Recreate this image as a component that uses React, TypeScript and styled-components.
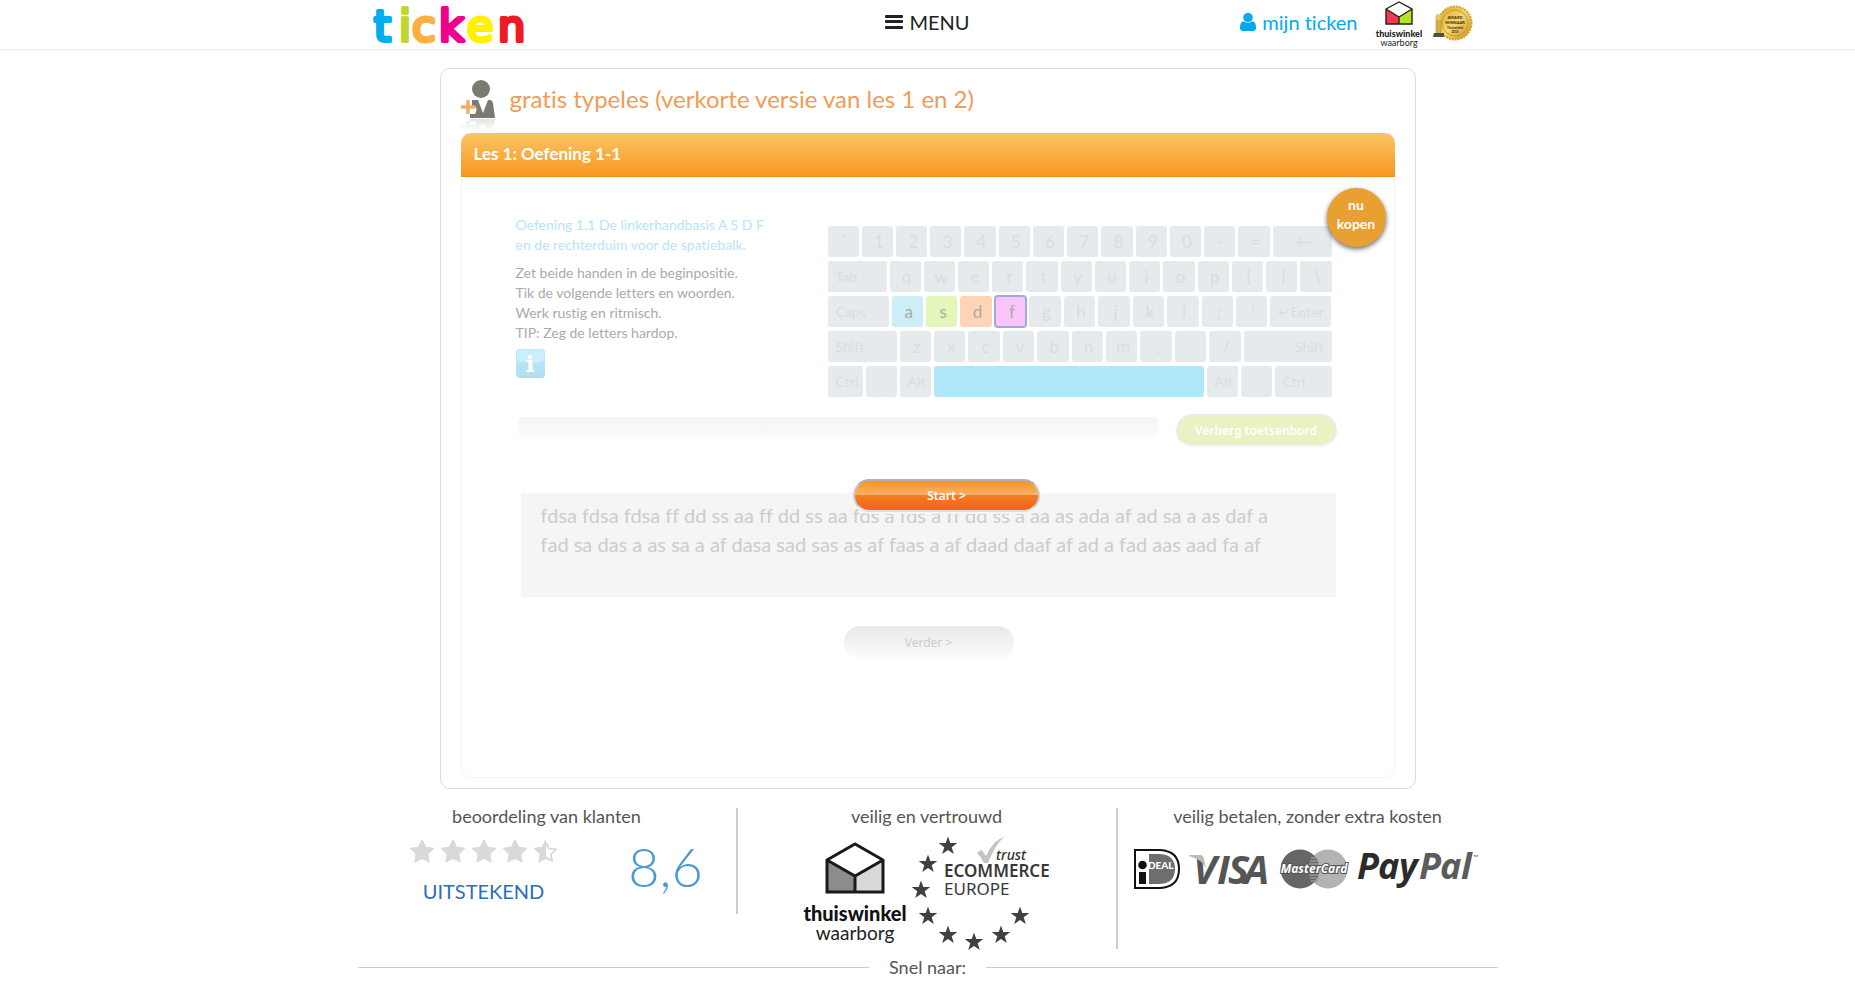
import React from 'react';
import styled, { createGlobalStyle, css } from 'styled-components';

const GlobalStyle = createGlobalStyle`
  *, *::before, *::after { box-sizing: border-box; }
  body {
    margin: 0;
    background: #fff;
    color: #555;
    font-family: Lato, "Liberation Sans", sans-serif;
    font-size: 18px;
    font-variant-ligatures: none;
  }
  h1, h2, h3, p { margin: 0; font-weight: 400; }
  button { font-family: inherit; cursor: pointer; }
  a { text-decoration: none; }
  svg { display: block; flex: none; overflow: visible; }
`;

/* ---------- top bar ---------- */

const TopBar = styled.header`
  border-bottom: 1px solid #eee;
  box-shadow: 0 1px 3px rgba(0, 0, 0, 0.05);
`;

const TopInner = styled.div`
  display: grid;
  grid-template-columns: 1fr auto 1fr;
  align-items: center;
  max-width: 1140px;
  height: 49px;
  margin: 0 auto;
  padding: 0 25px 0 15px;
`;

const HomeLink = styled.a`
  justify-self: start;
`;

const MenuButton = styled.button`
  display: flex;
  align-items: center;
  gap: 6px;
  height: 44px;
  padding: 0 0 6px;
  margin-left: 10px;
  border: 0;
  background: none;
  color: #222;
  font-size: 20px;
`;

const TopRight = styled.div`
  display: flex;
  justify-content: flex-end;
  align-items: center;
`;

const AccountLink = styled.a`
  display: flex;
  align-items: center;
  gap: 6px;
  height: 44px;
  margin-right: 16px;
  padding-bottom: 6px;
  color: #00a9f0;
  font-size: 20px;
`;

const BadgeLink = styled.a`
  margin-left: 8px;
  padding-bottom: 4px;
`;

/* ---------- lesson card ---------- */

const Card = styled.main`
  max-width: 976px;
  margin: 18px auto 19px;
  padding: 0 20px 10px;
  border: 1px solid #ddd;
  border-radius: 10px;
`;

const TitleRow = styled.div`
  display: flex;
  align-items: center;
  gap: 15px;
  height: 64px;
  padding-top: 8px;
`;

const Title = styled.h1`
  color: #ee9c57;
  font-size: 24px;
  line-height: 30px;
  padding-bottom: 12px;
`;

const Panel = styled.section`
  position: relative;
  border: 1px solid #f5f5f5;
  border-top: 0;
  border-radius: 10px;
`;

const PanelHead = styled.h2`
  margin: 0 -1px;
  padding: 0 13px 2px;
  border-bottom: 1px solid #f08a1c;
  border-radius: 10px 10px 0 0;
  background: linear-gradient(#fac562, #f99722);
  color: #fff;
  font-size: 17px;
  font-weight: 700;
  line-height: 41px;
`;

const PanelBody = styled.div`
  padding: 38px 57px 118px 54px;
`;

const BuyBadge = styled.a`
  position: absolute;
  top: 55px;
  right: 8px;
  display: flex;
  align-items: center;
  justify-content: center;
  width: 59px;
  height: 59px;
  padding-bottom: 8px;
  border-radius: 50%;
  background: #e9a033;
  box-shadow: 0 2px 5px rgba(0, 0, 0, 0.6);
  color: #fff;
  font-size: 14px;
  font-weight: 700;
  line-height: 19px;
  text-align: center;
`;

const LessonRow = styled.div`
  display: flex;
  justify-content: space-between;
  padding-right: 5px;
`;

const Instructions = styled.div`
  color: #aaa;
  font-size: 14px;
  line-height: 20px;
`;

const Goal = styled.p`
  margin-bottom: 8px;
  color: #b8e4fb;
`;

const InfoButton = styled.button`
  display: block;
  margin-top: 6px;
  padding: 0;
  border: 0;
  background: none;
`;

/* ---------- keyboard ---------- */

const Keyboard = styled.div`
  display: flex;
  flex-direction: column;
  gap: 4px;
  width: 504px;
  margin-top: 11px;
`;

const KeyRow = styled.div`
  display: flex;
  gap: 3px;
`;

type KeyProps = { $w?: number; $bg?: string; $small?: boolean; $end?: boolean; $active?: boolean };

const Key = styled.span<KeyProps>`
  ${({ $w }) => ($w ? css`flex: none; width: ${$w}px;` : css`flex: 1 1 0;`)}
  height: 31px;
  padding: ${({ $small }) => ($small ? '0 8px' : '0 0 0 3px')};
  border-radius: 3px;
  background: ${({ $bg }) => $bg || '#e5eaec'};
  color: ${({ $bg }) => ($bg ? '#aaa' : '#dadddf')};
  font-size: ${({ $small }) => ($small ? 14 : 17)}px;
  line-height: 31px;
  text-align: ${({ $small, $end }) => ($small ? ($end ? 'right' : 'left') : 'center')};
  white-space: nowrap;
  box-shadow: ${({ $active }) => ($active ? '0 0 0 1px #a0a8dc, inset 0 0 0 1px #a0a8dc' : 'none')};
`;

/* ---------- progress and typing area ---------- */

const ProgressRow = styled.div`
  display: flex;
  justify-content: space-between;
  align-items: flex-start;
  gap: 18px;
  margin-top: 17px;
  padding-left: 2px;
`;

const ProgressTrack = styled.div`
  flex: 1;
  height: 20px;
  margin-top: 3px;
  border-radius: 4px;
  background: linear-gradient(#f5f5f5, #fbfbfb);
`;

const PillButton = styled.button`
  height: 33px;
  padding: 0;
  border: 0;
  border-radius: 17px;
  font-family: "Noto Sans", "Open Sans", sans-serif;
  font-size: 12px;
  line-height: 33px;
`;

const HideButton = styled(PillButton)`
  width: 161px;
  border: 2px solid #ebebeb;
  border-bottom-color: #f5f5f5;
  background: #eaf2c4;
  color: #fff;
  font-weight: 600;
  line-height: 28px;
`;

const TypingArea = styled.div`
  position: relative;
  margin: 46px 1px 29px 5px;
  padding: 8px 20px 38px;
  background: #f5f5f5;
  color: #ccc;
  font-size: 20px;
  line-height: 29px;
  white-space: nowrap;
`;

const StartButton = styled(PillButton)`
  position: absolute;
  top: -14px;
  left: calc(50% - 75px);
  width: 187px;
  border: 2px solid #ccc;
  border-top-color: #b0b0b0;
  border-bottom-color: #ddd;
  background: linear-gradient(#f7941e, #fab06a 47%, #f47c20 50%, #f2641c);
  box-shadow: 0 2px 0 #f5f5f5;
  color: #fff;
  font-weight: 600;
  line-height: 28px;
`;

const Actions = styled.div`
  display: flex;
  justify-content: center;
  padding-left: 5px;
`;

const NextButton = styled(PillButton)`
  width: 170px;
  background: linear-gradient(#e9e9e9, #fcfcfc);
  color: #ccc;
`;

/* ---------- footer ---------- */

const Footer = styled.footer`
  max-width: 1140px;
  margin: 0 auto;
`;

const Columns = styled.div`
  display: grid;
  grid-template-columns: repeat(3, 1fr);
  align-items: start;
`;

const Column = styled.section`
  text-align: center;
  &:not(:last-child) { border-right: 2px solid #ccc; }
`;

const ColumnTitle = styled.h3`
  color: #555;
  font-size: 18px;
  line-height: 16px;
`;

const Rating = styled.div`
  display: grid;
  grid-template-columns: 9fr 4fr;
  align-items: center;
  height: 90px;
  padding-right: 14px;
`;

const StarRow = styled.div`
  display: flex;
  justify-content: center;
  gap: 5px;
  margin: 4px 0 14px;
`;

const Verdict = styled.p`
  color: #2a6fb8;
  font-size: 20px;
  line-height: 24px;
`;

const Score = styled.p`
  padding-bottom: 4px;
  color: #4a9bd3;
  font-size: 54px;
  font-weight: 300;
  line-height: 60px;
`;

const LogoRow = styled.div`
  display: flex;
  justify-content: center;
  padding: 10px 0 1px 2px;
`;

const PayRow = styled.div`
  display: flex;
  justify-content: center;
  align-items: center;
  gap: 9px;
  padding-top: 25px;
`;

const Divider = styled.div`
  display: flex;
  align-items: center;
  gap: 20px;
  margin-top: 9px;
  line-height: 18px;
  &::before, &::after {
    content: "";
    flex: 1;
    border-top: 1px solid #ccc;
  }
`;

/* ---------- drawings ---------- */

const STAR =
  'M1728 647q0 22-26 48l-363 354 86 500q1 7 1 20 0 21-10.5 35.5t-30.5 14.5q-19 0-40-12l-449-236-449 236q-22 12-40 12-21 0-31.5-14.5t-10.5-35.5q0-6 2-20l86-500-364-354q-25-27-25-48 0-37 56-46l502-73 225-455q19-41 49-41t49 41l225 455 502 73q56 9 56 46z';

const RatingStar = ({ half }: { half?: boolean }) => (
  <svg width="26" height="26" viewBox="0 0 1792 1792" fill="#d9d9d9" aria-hidden="true">
    {half ? (
      <>
        <clipPath id="left-half"><rect width="896" height="1792" /></clipPath>
        <path d={STAR} clipPath="url(#left-half)" />
        <path d="M896 250l190 400 520 62-370 350 76 440-416-215" fill="none" stroke="#d9d9d9" strokeWidth="130" strokeLinejoin="round" />
      </>
    ) : (
      <path d={STAR} />
    )}
  </svg>
);

const TickenLogo = () => (
  <svg width="156" height="44" viewBox="0 0 156 44" role="img" aria-label="ticken">
    <g fontFamily="DejaVu Sans, sans-serif" fontSize="43" strokeWidth="4" strokeLinejoin="round">
      <text x="1" y="38" fill="#00aeef" stroke="#00aeef">t</text>
      <text x="26" y="38" fill="#bfd730" stroke="#bfd730">i</text>
      <text x="39" y="38" fill="#fbb040" stroke="#fbb040">c</text>
      <text x="66" y="38" fill="#ec008c" stroke="#ec008c">k</text>
      <text x="94" y="38" fill="#fff200" stroke="#fff200">e</text>
      <text x="125" y="38" fill="#ed1c24" stroke="#ed1c24">n</text>
    </g>
  </svg>
);

const Bars = () => (
  <svg width="18" height="16" viewBox="0 0 18 16" fill="#222" aria-hidden="true">
    <rect y="1" width="18" height="3" rx="1" />
    <rect y="6" width="18" height="3" rx="1" />
    <rect y="12" width="18" height="3" rx="1" />
  </svg>
);

const UserIcon = () => (
  <svg width="16" height="18" viewBox="256 128 1280 1536" preserveAspectRatio="none" fill="#00a9f0" aria-hidden="true">
    <path d="M1536 1399q0 109-62.5 187t-150.5 78h-854q-88 0-150.5-78t-62.5-187q0-85 8.5-160.5t31.5-152 58.5-131 94-89 134.5-34.5q131 128 313 128t313-128q76 0 134.5 34.5t94 89 58.5 131 31.5 152 8.5 160.5zm-256-887q0 159-112.5 271.5t-271.5 112.5-271.5-112.5-112.5-271.5 112.5-271.5 271.5-112.5 271.5 112.5 112.5 271.5z" />
  </svg>
);

const Thuiswinkel = ({ small }: { small?: boolean }) => (
  <svg width={small ? 51 : 109} height={small ? 49 : 114} viewBox={small ? '0 0 51 49' : '0 0 109 114'} role="img" aria-label="thuiswinkel waarborg">
    {small ? (
      <>
        <path d="M12 9v15h13V17z" fill="#f5384b" />
        <path d="M38 9v15H25V17z" fill="#b5e61d" />
        <path d="M12 9L25 2l13 7v15H12zM12 9l13 8 13-8M25 17v7" fill="none" stroke="#222" strokeWidth="1.4" />
        <text x="25" y="37" textAnchor="middle" fontSize="9" fontWeight="900" fill="#222">thuiswinkel</text>
        <text x="25" y="46" textAnchor="middle" fontSize="9" fill="#222">waarborg</text>
      </>
    ) : (
      <>
        <path d="M25 26v32h28V42z" fill="#8c8c8c" />
        <path d="M81 26v32H53V42z" fill="#d9d9d9" />
        <path d="M25 26L53 10l28 16v32H25zM25 26l28 16 28-16M53 42v16" fill="none" stroke="#1a1a1a" strokeWidth="3" />
        <text x="53" y="87" textAnchor="middle" fontSize="20" fontWeight="900" fill="#111">thuiswinkel</text>
        <text x="53" y="106" textAnchor="middle" fontSize="19" fill="#222">waarborg</text>
      </>
    )}
  </svg>
);

const Medal = () => (
  <svg width="40" height="38" viewBox="0 0 40 38" role="img" aria-label="award">
    <defs>
      <linearGradient id="gold" x1="0" y1="0" x2="1" y2="1">
        <stop offset="0" stopColor="#d9a520" />
        <stop offset=".5" stopColor="#f4d878" />
        <stop offset="1" stopColor="#c28a14" />
      </linearGradient>
    </defs>
    <circle cx="22" cy="19" r="16.5" fill="url(#gold)" stroke="#d3a12a" strokeWidth="2" strokeDasharray="2 1" />
    <circle cx="22" cy="19" r="13" fill="none" stroke="#d09a1c" strokeWidth="1" />
    <g fontSize="4" fontWeight="900" fill="#4a3405" textAnchor="middle">
      <text x="22" y="15">AWARD</text>
      <text x="22" y="20">WINNAAR</text>
      <text x="22" y="25" fontSize="3">Thuiswinkel</text>
      <text x="22" y="29" fontSize="3">2015</text>
    </g>
    <rect x="3" y="12" width="5" height="18" rx="2" fill="#d6b044" stroke="#a88420" strokeWidth=".5" />
    <circle cx="5.5" cy="13" r="3" fill="#e5c766" />
    <path d="M1 29h10v4H0z" fill="#55503c" />
  </svg>
);

const PersonIcon = () => (
  <svg width="34" height="52" viewBox="0 0 34 52" aria-hidden="true">
    <defs>
      <linearGradient id="fade" x1="0" y1="0" x2="0" y2="1">
        <stop offset="0" stopColor="#fff" stopOpacity=".2" />
        <stop offset="1" stopColor="#fff" />
      </linearGradient>
    </defs>
    <ellipse cx="20" cy="10" rx="9" ry="9" fill="#7b7a74" />
    <path d="M11 21h6l5 13 5-13h2q2 0 3 3l2 15H9v-4h5q3-4 0-8h-3z" fill="#7b7a74" />
    <path d="M0 28h14M7 21v14" stroke="#f2ae62" strokeWidth="3.500" fill="none" />
    <path d="M9 40h25l-2 10h-6l-4-6-4 6h-7v-4h3q3-2 0-4H9z" fill="#dcdcda" />
    <path d="M0 48h14M7 42v9" stroke="#dcdcda" strokeWidth="3" fill="none" />
    <rect y="40" width="34" height="12" fill="url(#fade)" />
  </svg>
);

const InfoIcon = () => (
  <svg width="29" height="29" viewBox="0 0 29 29" aria-hidden="true">
    <defs>
      <linearGradient id="info-bg" x1="0" y1="0" x2="0" y2="1">
        <stop offset="0" stopColor="#bfe9fb" />
        <stop offset="1" stopColor="#b0dff0" />
      </linearGradient>
    </defs>
    <rect width="29" height="29" rx="4" fill="#bcd8e2" />
    <rect width="29" height="27.5" rx="4" fill="url(#info-bg)" />
    <path d="M1 5q0-4 4-4h19q4 0 4 4v7q-13 4-27 0z" fill="#c9effd" />
    <circle cx="14" cy="8" r="2.3" fill="#fff" />
    <path d="M10 11h6.500v10.500h2V23h-8.500v-1.500h2.500v-9H10z" fill="#fff" />
  </svg>
);

const EURO_STARS = [[37, 12], [17, 30], [10, 56], [17, 82], [37, 101], [63, 108], [90, 101], [109, 82]];

const EcommerceEurope = () => (
  <svg width="142" height="114" viewBox="0 0 142 114" role="img" aria-label="Ecommerce Europe trustmark">
    {EURO_STARS.map(([x, y]) => (
      <path key={`${x}-${y}`} transform={`translate(${x} ${y})`} fill="#404040"
        d="M0-9.500L2.300-2.900H9.300L3.700 1.300 5.800 8 0 4-5.800 8-3.700 1.300-9.300-2.900H-2.300z" />
    ))}
    <path d="M66 19q3-3 5-3 2 3 4 6 7-16 18-19-9 8-16 26h-4q-3-6-7-10z" fill="#c4c4c4" />
    <text x="85" y="26" fontFamily="Noto Sans, sans-serif" fontSize="14" fontStyle="italic" fontWeight="500" fill="#333">trust</text>
    <text x="33" y="43" fontFamily="Noto Sans, sans-serif" fontSize="17" fontWeight="600" fill="#383838">ECOMMERCE</text>
    <text x="33" y="61" fontFamily="Noto Sans, sans-serif" fontSize="17" fill="#383838">EUROPE</text>
  </svg>
);

const Ideal = () => (
  <svg width="46" height="40" viewBox="0 0 46 40" role="img" aria-label="iDEAL">
    <path d="M1 1h25q19 1 19 19T26 39H1z" fill="#fff" stroke="#111" strokeWidth="2" />
    <path d="M15 5h11q15 1 15 15T26 35H15z" fill="#6e6e6e" />
    <circle cx="8.500" cy="16" r="4.300" fill="#111" />
    <rect x="5" y="23" width="7" height="12" fill="#111" />
    <text x="14" y="20" fontSize="10" fontWeight="900" fill="#fff">DEAL</text>
  </svg>
);

const Visa = () => (
  <svg width="82" height="40" viewBox="0 0 82 40" role="img" aria-label="VISA">
    <g fontFamily="Open Sans, sans-serif" fontSize="40" fontWeight="700" fontStyle="italic" fill="#555">
      <text y="35"><tspan x="4">V</tspan><tspan x="28">I</tspan><tspan x="39">S</tspan><tspan x="55">A</tspan></text>
    </g>
    <path d="M0 6h11q3 0 4 4l2 9Q12 10 0 7z" fill="#bbb" />
  </svg>
);

const MasterCard = () => (
  <svg width="68" height="40" viewBox="0 0 68 40" role="img" aria-label="MasterCard">
    <circle cx="48" cy="20" r="19.5" fill="#b3b3b3" />
    <circle cx="20" cy="20" r="19.5" fill="#666" />
    <path d="M31 9h7M30 12h9M29 15h10M29 26h10M30 29h9M31 32h7" stroke="#999" strokeWidth="1.5" />
    <text x="34" y="24" textAnchor="middle" fontFamily="Open Sans, sans-serif" fontSize="12" fontWeight="700" fontStyle="italic" fill="#fff" stroke="#555" strokeWidth="2" paintOrder="stroke">MasterCard</text>
  </svg>
);

const PayPal = () => (
  <svg width="124" height="40" viewBox="0 0 124 40" role="img" aria-label="PayPal">
    <g fontFamily="Open Sans, sans-serif" fontSize="36" fontWeight="700" fontStyle="italic">
      <text y="30"><tspan x="0" fill="#2b2b2b">P</tspan><tspan x="21" fill="#2b2b2b">a</tspan><tspan x="42" fill="#2b2b2b">y</tspan></text>
      <text y="30"><tspan x="62" fill="#5c5c5c">P</tspan><tspan x="83" fill="#5c5c5c">a</tspan><tspan x="104" fill="#5c5c5c">l</tspan></text>
    </g>
    <text x="116" y="11" fontSize="7" fill="#555">™</text>
  </svg>
);

/* ---------- page ---------- */

const HOME_COLORS: Record<string, string> = { a: '#cdeef5', s: '#e3f7bb', d: '#ffd5b6', f: '#fac5fb' };

const Letters = ({ keys }: { keys: string }) => (
  <>
    {keys.split('').map((k) => (
      <Key key={k} $bg={HOME_COLORS[k]} $active={k === 'f'}>{k}</Key>
    ))}
  </>
);

export default function App() {
  return (
    <>
      <GlobalStyle />
      <TopBar>
        <TopInner>
          <HomeLink href="#"><TickenLogo /></HomeLink>
          <MenuButton type="button"><Bars />MENU</MenuButton>
          <TopRight>
            <AccountLink href="#"><UserIcon />mijn ticken</AccountLink>
            <a href="#"><Thuiswinkel small /></a>
            <BadgeLink href="#"><Medal /></BadgeLink>
          </TopRight>
        </TopInner>
      </TopBar>

      <Card>
        <TitleRow>
          <PersonIcon />
          <Title>gratis typeles (verkorte versie van les 1 en 2)</Title>
        </TitleRow>
        <Panel>
          <PanelHead>Les 1: Oefening 1-1</PanelHead>
          <BuyBadge href="#">nu<br />kopen</BuyBadge>
          <PanelBody>
            <LessonRow>
              <Instructions>
                <Goal>Oefening 1.1 De linkerhandbasis A S D F<br />en de rechterduim voor de spatiebalk.</Goal>
                <p>Zet beide handen in de beginpositie.<br />Tik de volgende letters en woorden.<br />Werk rustig en ritmisch.<br />TIP: Zeg de letters hardop.</p>
                <InfoButton type="button" aria-label="Informatie"><InfoIcon /></InfoButton>
              </Instructions>
              <Keyboard>
                <KeyRow><Letters keys="`1234567890-=" /><Key $w={59}>←</Key></KeyRow>
                <KeyRow><Key $w={59} $small>Tab</Key><Letters keys="qwertyuiop[]\" /></KeyRow>
                <KeyRow><Key $w={61} $small>Caps</Key><Letters keys="asdfghjkl;'" /><Key $w={61} $small $end>↵Enter</Key></KeyRow>
                <KeyRow><Key $w={69} $small>Shift</Key><Letters keys="zxcvbnm,./" /><Key $w={88} $small $end>Shift</Key></KeyRow>
                <KeyRow>
                  <Key $w={35} $small>Ctrl</Key><Key $w={31} /><Key $w={31} $small>Alt</Key>
                  <Key $bg="#b1e7fb" />
                  <Key $w={31} $small>Alt</Key><Key $w={31} /><Key $w={57} $small>Ctrl</Key>
                </KeyRow>
              </Keyboard>
            </LessonRow>
            <ProgressRow>
              <ProgressTrack />
              <HideButton type="button">Verberg toetsenbord</HideButton>
            </ProgressRow>
            <TypingArea>
              fdsa fdsa fdsa ff dd ss aa ff dd ss aa fds a fds a ff dd ss a aa as ada af ad sa a as daf a<br />
              fad sa das a as sa a af dasa sad sas as af faas a af daad daaf af ad a fad aas aad fa af
              <StartButton type="button">Start &gt;</StartButton>
            </TypingArea>
            <Actions>
              <NextButton type="button">Verder &gt;</NextButton>
            </Actions>
          </PanelBody>
        </Panel>
      </Card>

      <Footer>
        <Columns>
          <Column>
            <ColumnTitle>beoordeling van klanten</ColumnTitle>
            <Rating>
              <div>
                <StarRow><RatingStar /><RatingStar /><RatingStar /><RatingStar /><RatingStar half /></StarRow>
                <Verdict>UITSTEKEND</Verdict>
              </div>
              <Score>8,6</Score>
            </Rating>
          </Column>
          <Column>
            <ColumnTitle>veilig en vertrouwd</ColumnTitle>
            <LogoRow><Thuiswinkel /><EcommerceEurope /></LogoRow>
          </Column>
          <Column>
            <ColumnTitle>veilig betalen, zonder extra kosten</ColumnTitle>
            <PayRow><Ideal /><Visa /><MasterCard /><PayPal /></PayRow>
          </Column>
        </Columns>
        <Divider>Snel naar:</Divider>
      </Footer>
    </>
  );
}
